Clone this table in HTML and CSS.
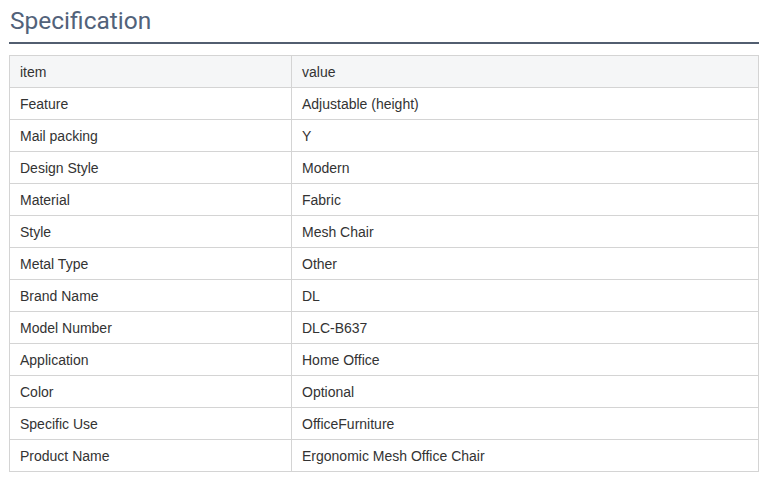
FILE: index.html
```html
<!DOCTYPE html>
<html>
<head>
<meta charset="utf-8">
<link rel="stylesheet" href="styles.css">
</head>
<body>
<div class="spec">
  <h2 class="spec-title">Specification</h2>
  <table class="spec-table">
    <tr class="head"><td class="c1">item</td><td>value</td></tr>
    <tr><td class="c1">Feature</td><td>Adjustable (height)</td></tr>
    <tr><td class="c1">Mail packing</td><td>Y</td></tr>
    <tr><td class="c1">Design Style</td><td>Modern</td></tr>
    <tr><td class="c1">Material</td><td>Fabric</td></tr>
    <tr><td class="c1">Style</td><td>Mesh Chair</td></tr>
    <tr><td class="c1">Metal Type</td><td>Other</td></tr>
    <tr><td class="c1">Brand Name</td><td>DL</td></tr>
    <tr><td class="c1">Model Number</td><td>DLC-B637</td></tr>
    <tr><td class="c1">Application</td><td>Home Office</td></tr>
    <tr><td class="c1">Color</td><td>Optional</td></tr>
    <tr><td class="c1">Specific Use</td><td>OfficeFurniture</td></tr>
    <tr><td class="c1">Product Name</td><td>Ergonomic Mesh Office Chair</td></tr>
  </table>
</div>
</body>
</html>
```
FILE: styles.css
```css
html, body { margin: 0; padding: 0; background: #fff; }
.spec { margin-left: 9px; width: 750px; }
.spec-title {
  margin: 0;
  padding: 6px 0 7px 1px;
  font-family: Roboto, "Liberation Sans", sans-serif;
  font-weight: 400;
  font-size: 24.5px;
  line-height: 29px;
  color: #52627a;
  border-bottom: 2px solid #525e70;
}
.spec-table {
  margin-top: 11px;
  width: 750px;
  border-collapse: collapse;
  font-family: "Liberation Sans", Arial, sans-serif;
  font-size: 14px;
  color: #333;
}
.spec-table td {
  border: 1px solid #d4d4d4;
  padding: 0 10px;
  height: 31px;
  box-sizing: border-box;
}
.spec-table .c1 { width: 282px; }
.spec-table tr { height: 32px; }
.spec-table .head td { background: #f5f6f7; }
```
